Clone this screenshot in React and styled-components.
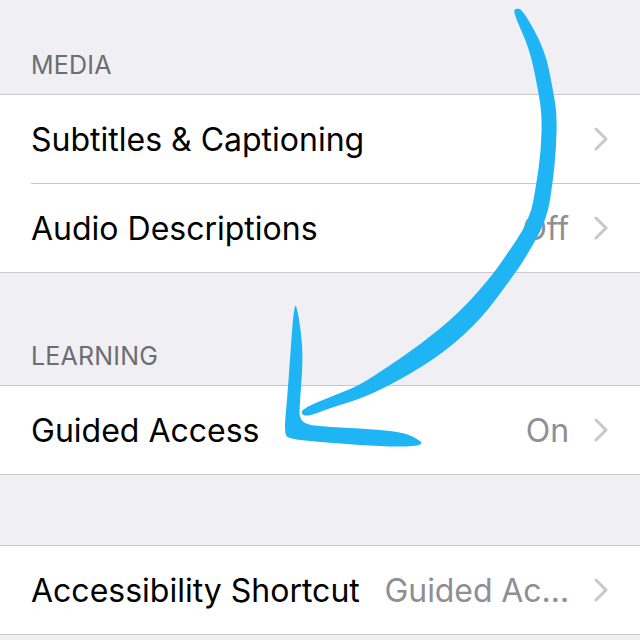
import React from "react";
import styled, { createGlobalStyle } from "styled-components";

const GlobalStyle = createGlobalStyle`
  html, body {
    margin: 0;
    padding: 0;
    background: #efeff4;
  }
  body {
    font-family: "Inter", "Roboto", "Liberation Sans", sans-serif;
    -webkit-font-smoothing: antialiased;
  }
`;

const Page = styled.div`
  position: relative;
  width: 640px;
  height: 640px;
  overflow: hidden;
  background: #efeff4;
`;

const SectionHeader = styled.div`
  height: ${(props) => props.height}px;
  box-sizing: border-box;
  display: flex;
  align-items: flex-end;
  padding: 0 0 14px 31px;
  font-size: 25px;
  line-height: 30px;
  color: #6d6d72;
  letter-spacing: 0.2px;
`;

const Spacer = styled.div`
  height: ${(props) => props.height}px;
`;

const Group = styled.div`
  background: #fff;
  border-top: 1px solid #c8c7cc;
  border-bottom: 1px solid #c8c7cc;
`;

const Row = styled.div`
  padding-left: 31px;
  & + & > div {
    border-top: 1px solid #c8c7cc;
  }
`;

const RowBody = styled.div`
  height: 88px;
  display: flex;
  align-items: center;
  padding-right: 32px;
`;

const Label = styled.div`
  flex: 1;
  font-size: 32px;
  color: #000;
  white-space: nowrap;
  letter-spacing: 0;
`;

const Value = styled.div`
  font-size: 32px;
  color: #8e8e93;
  white-space: nowrap;
  letter-spacing: -0.1px;
  margin-right: 25px;
`;

const Chevron = () => (
  <svg width="14" height="24" viewBox="0 0 14 24">
    <polyline
      points="2,2 12,12 2,22"
      fill="none"
      stroke="#c7c7cc"
      strokeWidth="3"
      strokeLinecap="round"
      strokeLinejoin="round"
    />
  </svg>
);

const Overlay = styled.svg`
  position: absolute;
  left: 0;
  top: 0;
  pointer-events: none;
`;

// smooth closed outline through the given points
const smooth = (pts) => {
  const n = pts.length;
  const mid = (a, b) => [(a[0] + b[0]) / 2, (a[1] + b[1]) / 2];
  let start = mid(pts[n - 1], pts[0]);
  let d = `M${start[0]},${start[1]}`;
  for (let i = 0; i < n; i++) {
    const p = pts[i];
    const m = mid(p, pts[(i + 1) % n]);
    d += ` Q${p[0]},${p[1]} ${m[0]},${m[1]}`;
  }
  return d + " Z";
};

const curveRight = [
  [523, 10], [545, 50], [553, 90], [557, 115], [556, 150], [553, 180],
  [547, 220], [523, 262], [510, 280], [482, 318], [445, 352], [400, 380],
  [363, 398], [330, 408], [307, 417],
];
const curveLeft = [
  [513, 12], [530, 50], [538, 90], [542, 115], [541, 150], [537, 180],
  [530, 220], [503, 260], [490, 278], [460, 312], [420, 345], [380, 372],
  [358, 386], [330, 397], [306, 407],
];
const curve = [...curveRight, [300, 413], ...curveLeft.reverse(), [516, 8]];

const head = [
  [296, 303], [301, 330], [303, 360], [300, 400], [299, 424], [330, 427],
  [370, 429], [400, 432], [415, 437], [425, 445], [400, 447], [360, 445],
  [320, 442], [290, 439], [284, 434], [287, 400], [290, 360], [292, 330],
  [294, 310],
];

const Arrow = () => (
  <Overlay width="640" height="640" viewBox="0 0 640 640">
    <path d={smooth(curve)} fill="#1fb4f4" />
    <path d={smooth(head)} fill="#1fb4f4" />
  </Overlay>
);

const Cell = ({ label, value }) => (
  <Row>
    <RowBody>
      <Label>{label}</Label>
      {value && <Value>{value}</Value>}
      <Chevron />
    </RowBody>
  </Row>
);

export default function App() {
  return (
    <>
      <GlobalStyle />
      <Page>
        <SectionHeader height={94}>MEDIA</SectionHeader>
        <Group>
          <Cell label="Subtitles & Captioning" />
          <Cell label="Audio Descriptions" value="Off" />
        </Group>
        <SectionHeader height={112}>LEARNING</SectionHeader>
        <Group>
          <Cell label="Guided Access" value="On" />
        </Group>
        <Spacer height={70} />
        <Group>
          <Cell label="Accessibility Shortcut" value="Guided Ac…" />
        </Group>
        <Arrow />
      </Page>
    </>
  );
}
